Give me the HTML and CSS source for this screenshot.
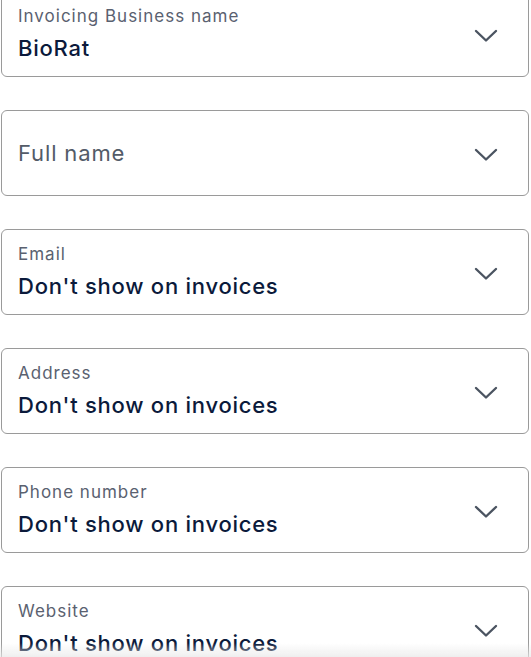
FILE: index.html
```html
<!DOCTYPE html>
<html>
<head>
<meta charset="utf-8">
<link rel="stylesheet" href="styles.css">
</head>
<body>
<div class="form">
  <div class="select">
    <div class="text">
      <div class="label">Invoicing Business name</div>
      <div class="value">BioRat</div>
    </div>
    <svg class="chev" viewBox="0 0 24 14"><path d="M2 2 L12 11.5 L22 2" /></svg>
  </div>
  <div class="select">
    <div class="text">
      <div class="placeholder">Full name</div>
    </div>
    <svg class="chev" viewBox="0 0 24 14"><path d="M2 2 L12 11.5 L22 2" /></svg>
  </div>
  <div class="select">
    <div class="text">
      <div class="label">Email</div>
      <div class="value">Don't show on invoices</div>
    </div>
    <svg class="chev" viewBox="0 0 24 14"><path d="M2 2 L12 11.5 L22 2" /></svg>
  </div>
  <div class="select">
    <div class="text">
      <div class="label">Address</div>
      <div class="value">Don't show on invoices</div>
    </div>
    <svg class="chev" viewBox="0 0 24 14"><path d="M2 2 L12 11.5 L22 2" /></svg>
  </div>
  <div class="select">
    <div class="text">
      <div class="label">Phone number</div>
      <div class="value">Don't show on invoices</div>
    </div>
    <svg class="chev" viewBox="0 0 24 14"><path d="M2 2 L12 11.5 L22 2" /></svg>
  </div>
  <div class="select">
    <div class="text">
      <div class="label">Website</div>
      <div class="value">Don't show on invoices</div>
    </div>
    <svg class="chev" viewBox="0 0 24 14"><path d="M2 2 L12 11.5 L22 2" /></svg>
  </div>
</div>
<div class="fade"></div>
</body>
</html>
```
FILE: styles.css
```css
html, body {
  margin: 0;
  padding: 0;
  background: #ffffff;
  overflow: hidden;
}
body {
  font-family: Inter, "Liberation Sans", Arial, sans-serif;
}
.form {
  display: flex;
  flex-direction: column;
  gap: 33px;
  margin-top: -9px;
  margin-left: 1px;
  width: 528px;
}
.select {
  box-sizing: border-box;
  height: 86px;
  border: 1px solid #9a9a9a;
  border-radius: 6px;
  display: flex;
  align-items: center;
  padding: 0 30px 0 16px;
}
.text {
  flex: 1;
  display: flex;
  flex-direction: column;
}
.label {
  font-size: 17px;
  line-height: 20px;
  letter-spacing: 1px;
  color: #5a6170;
  margin-top: -10px;
}
.value {
  font-size: 22px;
  line-height: 26px;
  letter-spacing: 0.75px;
  font-weight: 500;
  color: #0b1a3b;
  margin-top: 9px;
  margin-bottom: -9px;
}
.placeholder {
  font-size: 22px;
  line-height: 26px;
  letter-spacing: 0.85px;
  color: #535b68;
}
.chev {
  width: 24px;
  height: 14px;
  margin-top: 4px;
  fill: none;
  stroke: #4b5461;
  stroke-width: 2.4;
  stroke-linecap: round;
  stroke-linejoin: round;
}
.fade {
  position: fixed;
  left: 0;
  right: 0;
  bottom: 0;
  height: 14px;
  background: linear-gradient(to bottom, rgba(240,240,240,0), rgba(232,232,232,0.7));
}
```
